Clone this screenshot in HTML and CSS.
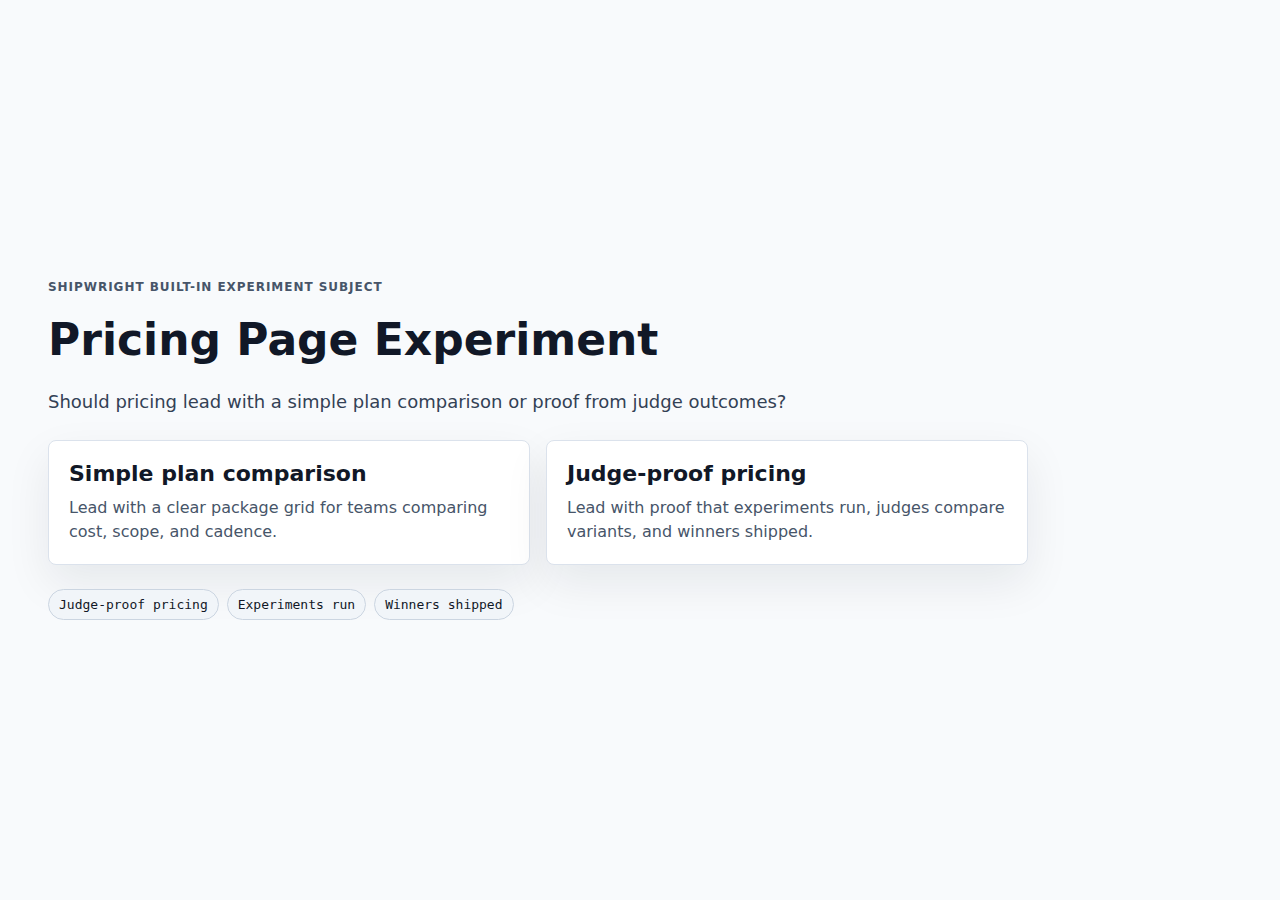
FILE: index.html
```html
<!DOCTYPE html>
<html lang="en">
<head>
    <meta charset="UTF-8">
    <meta name="viewport" content="width=device-width, initial-scale=1.0">
    <title>Pricing Page Experiment</title>
    <link rel="stylesheet" href="styles.css">
</head>
<body>
    <main class="subject">
        <p class="eyebrow">Shipwright built-in experiment subject</p>
        <h1>Pricing Page Experiment</h1>
        <p class="lede">Should pricing lead with a simple plan comparison or proof from judge outcomes?</p>

        <div class="variants">
            <section class="card">
                <h2>Simple plan comparison</h2>
                <p>Lead with a clear package grid for teams comparing cost, scope, and cadence.</p>
            </section>
            <section class="card">
                <h2>Judge-proof pricing</h2>
                <p>Lead with proof that experiments run, judges compare variants, and winners shipped.</p>
            </section>
        </div>

        <div class="chips">
            <span class="chip">Judge-proof pricing</span>
            <span class="chip">Experiments run</span>
            <span class="chip">Winners shipped</span>
        </div>
    </main>
</body>
</html>
```

FILE: styles.css
```css
* {
    box-sizing: border-box;
}
body {
    margin: 0;
    min-height: 100vh;
    display: flex;
    align-items: center;
    padding: 48px;
    background: #f8fafc;
    font-family: "DejaVu Sans", sans-serif;
    color: #0f172a;
}
.subject {
    width: 980px;
}
.eyebrow {
    margin: 0;
    font-size: 12px;
    font-weight: bold;
    letter-spacing: 0.08em;
    text-transform: uppercase;
    color: #475569;
}
h1 {
    margin: 21px 0 0;
    font-size: 44px;
    line-height: 1.15;
    color: #111827;
}
.lede {
    margin: 22px 0 0;
    font-size: 18px;
    line-height: 1.5;
    color: #334155;
}
.variants {
    display: grid;
    grid-template-columns: 1fr 1fr;
    gap: 16px;
    margin-top: 25px;
}
.card {
    background: #fff;
    border: 1px solid #dbe2ec;
    border-radius: 8px;
    padding: 20px;
    box-shadow: 0 18px 45px rgba(15, 23, 42, 0.08);
}
.card h2 {
    margin: 0 0 9px;
    font-size: 22px;
    line-height: 1.2;
    color: #111827;
}
.card p {
    margin: 0;
    font-size: 16px;
    line-height: 1.5;
    color: #475569;
}
.chips {
    display: flex;
    gap: 8px;
    margin-top: 24px;
}
.chip {
    padding: 6px 10px;
    border: 1px solid #cbd5e1;
    border-radius: 999px;
    background: #f1f5f9;
    font-family: "DejaVu Sans Mono", monospace;
    font-size: 13px;
    line-height: 17px;
    color: #111827;
}
```
